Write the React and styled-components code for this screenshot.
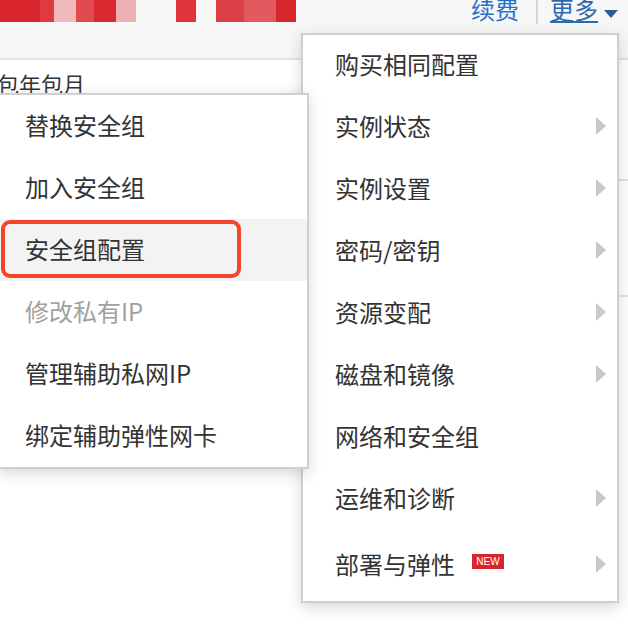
import React from "react";
import styled, { createGlobalStyle } from "styled-components";

const GlobalStyle = createGlobalStyle`
  html, body {
    margin: 0;
    padding: 0;
    background: #fff;
  }
  body {
    font-family: "Noto Sans CJK SC", "Noto Sans", sans-serif;
    color: #333;
  }
`;

const moreItems = [
  { label: "购买相同配置" },
  { label: "实例状态", sub: true },
  { label: "实例设置", sub: true },
  { label: "密码/密钥", sub: true },
  { label: "资源变配", sub: true },
  { label: "磁盘和镜像", sub: true },
  { label: "网络和安全组", open: true },
  { label: "运维和诊断", sub: true },
  { label: "部署与弹性", sub: true, badge: "NEW", tall: true },
];

const groupItems = [
  { label: "替换安全组" },
  { label: "加入安全组" },
  { label: "安全组配置", active: true, marked: true },
  { label: "修改私有IP", disabled: true },
  { label: "管理辅助私网IP" },
  { label: "绑定辅助弹性网卡" },
];

// mosaic blocks over the instance name
const blurBlocks = [
  ["#d8262c", 40], ["#de3a3f", 14], ["#f0b9bc", 22], ["#e04a4f", 18],
  ["#d92a30", 22], ["#eeb0b4", 20], [null, 40], ["#e0343a", 20],
  [null, 20], ["#dd4046", 28], ["#e35a5e", 32], ["#d7272d", 20],
];

export default function App() {
  return (
    <Page>
      <GlobalStyle />
      <TopBar>
        <Blurred>
          {blurBlocks.map(([c, w], i) => (
            <Block key={i} $color={c} $w={w} />
          ))}
        </Blurred>
        <Links>
          <Link>续费</Link>
          <Divider />
          <Link $underline>更多</Link>
          <Caret />
        </Links>
      </TopBar>
      <Table>
        <Row $h={119}>
          <Cell>包年包月</Cell>
        </Row>
        <Row $h={114} />
        <Row $h={200} $last />
      </Table>

      <MoreMenu>
        {moreItems.map((it) => (
          <Item key={it.label} $tall={it.tall}>
            <Label>
              {it.label}
              {it.badge && <Badge>{it.badge}</Badge>}
            </Label>
            {it.sub && <Arrow />}
          </Item>
        ))}
      </MoreMenu>

      <SubMenu>
        {groupItems.map((it) => (
          <SubItem key={it.label} $active={it.active} $disabled={it.disabled}>
            {it.label}
            {it.marked && <Mark />}
          </SubItem>
        ))}
      </SubMenu>
    </Page>
  );
}

const Page = styled.div`
  position: relative;
  width: 628px;
  height: 642px;
  overflow: hidden;
  background: #fff;
`;

const TopBar = styled.div`
  height: 58px;
  background: #f7f7f7;
  border-bottom: 2px solid #e2e2e2;
  display: flex;
  justify-content: space-between;
  align-items: flex-start;
`;

const Blurred = styled.div`
  display: flex;
  height: 22px;
`;

const Block = styled.span`
  width: ${(p) => p.$w}px;
  height: 22px;
  background: ${(p) => p.$color || "transparent"};
`;

const Links = styled.div`
  display: flex;
  align-items: flex-start;
  padding-right: 10px;
  margin-top: -5px;
`;

const Link = styled.span`
  font-size: 24px;
  line-height: 28px;
  color: ${(p) => (p.$underline ? "#2c6aae" : "#1f72cc")};
  text-decoration: ${(p) => (p.$underline ? "underline" : "none")};
  text-underline-offset: 2px;
  text-decoration-thickness: 2px;
`;

const Divider = styled.span`
  width: 2px;
  height: 24px;
  background: #d6d6d6;
  margin: 5px 12px 0 17px;
`;

const Caret = styled.span`
  width: 0;
  height: 0;
  margin: 15px 0 0 6px;
  border-left: 7px solid transparent;
  border-right: 7px solid transparent;
  border-top: 8px solid #2a5f96;
`;

const Table = styled.div`
  display: flex;
  flex-direction: column;
`;

const Row = styled.div`
  height: ${(p) => p.$h}px;
  border-bottom: ${(p) => (p.$last ? "none" : "2px solid #e2e2e2")};
`;

const Cell = styled.div`
  font-size: 22px;
  line-height: 30px;
  padding-top: 8px;
  margin-left: -3px;
  color: #333;
`;

const Menu = styled.div`
  position: absolute;
  background: #fff;
  border: 2px solid #cfcfcf;
  box-shadow: 0 4px 14px rgba(0, 0, 0, 0.16);
  display: flex;
  flex-direction: column;
`;

const MoreMenu = styled(Menu)`
  left: 301px;
  top: 33px;
  width: 314px;
`;

const SubMenu = styled(Menu)`
  left: -2px;
  top: 93px;
  width: 307px;
  z-index: 2;
`;

const Item = styled.div`
  box-sizing: border-box;
  height: ${(p) => (p.$tall ? 70 : 62)}px;
  display: flex;
  align-items: center;
  justify-content: space-between;
  padding: 0 11px 5px 32px;
  font-size: 24px;
  color: #333;
`;

const Label = styled.span`
  display: flex;
  align-items: center;
`;

const Badge = styled.span`
  margin-left: 17px;
  width: 32px;
  height: 15px;
  background: #d9262c;
  color: #fff;
  font-family: "Liberation Sans", Arial, sans-serif;
  font-size: 10px;
  line-height: 15px;
  text-align: center;
  margin-top: -4px;
`;

const Arrow = styled.span`
  width: 0;
  height: 0;
  border-top: 9px solid transparent;
  border-bottom: 9px solid transparent;
  border-left: 10px solid #c9c9c9;
`;

const SubItem = styled.div`
  position: relative;
  box-sizing: border-box;
  height: 62px;
  display: flex;
  align-items: center;
  padding: 0 0 4px 25px;
  font-size: 24px;
  color: ${(p) => (p.$disabled ? "#a0a0a0" : "#333")};
  background: ${(p) => (p.$active ? "#f3f3f3" : "transparent")};
`;

const Mark = styled.span`
  position: absolute;
  left: 1px;
  top: 1px;
  width: 240px;
  height: 58px;
  box-sizing: border-box;
  border: 4px solid #f4452a;
  border-radius: 9px;
`;
